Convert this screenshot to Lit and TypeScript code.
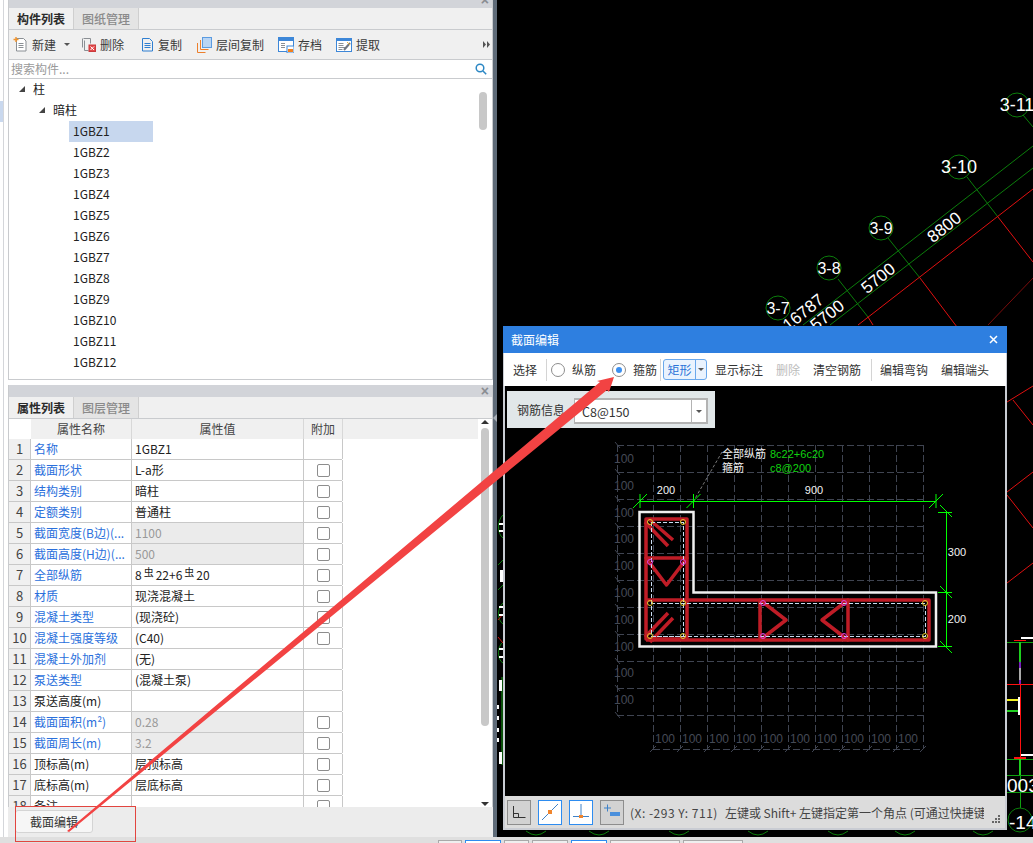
import { LitElement, html, css, svg } from 'lit'
import { customElement } from 'lit/decorators.js'

const FONT = `"Noto Sans CJK SC", "Liberation Sans", sans-serif`

// 属性列表 rows: name, value, blue label, greyed value, checkbox
const ROWS = [
    ['名称', '1GBZ1', 1, 0, 0],
    ['截面形状', 'L-a形', 1, 0, 1],
    ['结构类别', '暗柱', 1, 0, 1],
    ['定额类别', '普通柱', 1, 0, 1],
    ['截面宽度(B边)(...', '1100', 1, 1, 1],
    ['截面高度(H边)(...', '500', 1, 1, 1],
    ['全部纵筋', '', 1, 0, 1],
    ['材质', '现浇混凝土', 1, 0, 1],
    ['混凝土类型', '(现浇砼)', 1, 0, 1],
    ['混凝土强度等级', '(C40)', 1, 0, 1],
    ['混凝土外加剂', '(无)', 1, 0, 0],
    ['泵送类型', '(混凝土泵)', 1, 0, 0],
    ['泵送高度(m)', '', 0, 0, 0],
    ['截面面积(m²)', '0.28', 1, 1, 1],
    ['截面周长(m)', '3.2', 1, 1, 1],
    ['顶标高(m)', '层顶标高', 0, 0, 1],
    ['底标高(m)', '层底标高', 0, 0, 1],
    ['备注', '', 0, 0, 1],
] as const

const range = (n: number) => Array.from({ length: n }, (_, i) => i)

@customElement('app-root')
export class AppRoot extends LitElement {
    static styles = css`
        :host {
            display: block;
            position: relative;
            width: 1033px;
            height: 843px;
            overflow: hidden;
            background: #f4f4f4;
            font: 12px/21px "Noto Sans CJK SC", "Liberation Sans", sans-serif;
            color: #222;
        }
        .page { display: flex; flex-direction: column; height: 843px; }
        .main { display: flex; height: 837px; }
        .sliver { width: 8px; background: #fff; position: relative; box-sizing: border-box; }
        .sliver i { position: absolute; left: 0; top: 101px; width: 3px; height: 21px; background: #c9d8ee; }
        .sliver::after { content: ""; position: absolute; left: 3px; top: 0; bottom: 0; width: 1px; background: #d4d6da; }
        .side { width: 485px; display: flex; flex-direction: column; background: #fff; }
        .panel { display: flex; flex-direction: column; overflow: hidden; background: #fff; border-left: 1px solid #c9cbce; border-right: 1px solid #c9cbce; box-sizing: border-box; }
        .panel.top { height: 380px; border-bottom: 1px solid #c9cbce; }
        .panel.bottom { height: 422px; margin-top: 5px; }
        .caption { height: 8px; background: #d2d4d9; position: relative; flex: none; }
        .caption.small { height: 12px; }
        .x { position: absolute; right: 3px; top: -7px; color: #8a8d92; font: bold 14px/14px "Liberation Sans", sans-serif; }
        .caption.small .x { top: -1px; }
        .tabs { height: 21px; flex: none; display: flex; background: #f0f0f0; border-bottom: 1px solid #c9cbce; }
        .tab { width: 64px; text-align: center; color: #8a8a8a; background: #e4e4e4; border-right: 1px solid #cfcfcf; line-height: 21px; font-size: 12px; font-weight: 500; }
        .tab.on { color: #2b2b2b; background: #f0f0f0; font-weight: 700; }
        .tools { height: 29px; flex: none; display: flex; align-items: center; background: #f0f0f0; border-bottom: 1px solid #c9cbce; position: relative; color: #3a3a3a; }
        .tool { display: inline-flex; align-items: center; gap: 4px; white-space: nowrap; }
        .tool .caret { margin-left: 4px; }
        .caret { display: inline-block; width: 0; height: 0; border: 3px solid transparent; border-top: 3px solid #555; border-bottom: 0; }
        .more { position: absolute; right: 2px; top: 11px; line-height: 0; }
        .search { height: 18px; flex: none; display: flex; align-items: center; justify-content: space-between; padding: 0 5px 0 2px; color: #9a9a9a; border-bottom: 1px solid #c9cbce; line-height: 18px; }
        .tree { flex: 1; position: relative; overflow: hidden; background: #fff; color: #222; }
        .node { height: 21px; line-height: 20px; position: relative; white-space: nowrap; }
        .l0 { padding-left: 24px; }
        .l1 { padding-left: 44px; }
        .l2 { padding-left: 60px; }
        .tri { position: absolute; top: 7px; width: 6px; height: 6px; background: #444; clip-path: polygon(100% 0, 100% 100%, 0 100%); }
        .l0 .tri { left: 10px; }
        .l1 .tri { left: 30px; }
        .leaf { display: block; width: 84px; height: 21px; padding-left: 4px; box-sizing: border-box; }
        .leaf.sel { background: #c7d7ee; }
        .vbar { position: absolute; background: #c8c8c8; border-radius: 4px; width: 8px; }
        .vbar.one { right: 5px; top: 13px; height: 38px; }
        .grid { flex: 1; position: relative; overflow: hidden; background: #fff; }
        .head, .row { display: flex; height: 21px; line-height: 20px; box-sizing: border-box; border-bottom: 1px solid #c8c8c8; width: 333px; }
        .head { width: 469px; background: #f0f0f0; border-bottom: 0; height: 20px; }
        .head .c-no { background: #fff; border: 0; }
        .c-no { width: 22px; flex: none; text-align: center; background: #f0f0f0; border-right: 1px solid #c8c8c8; box-sizing: border-box; color: #444; font-size: 13px; }
        .c-name { width: 101px; flex: none; padding-left: 3px; box-sizing: border-box; border-right: 1px solid #c8c8c8; white-space: nowrap; overflow: hidden; background: #fff; }
        .c-val { width: 172px; flex: none; padding-left: 3px; box-sizing: border-box; border-right: 1px solid #c8c8c8; white-space: nowrap; background: #fff; }
        .c-add { width: 39px; flex: none; border-right: 1px solid #c8c8c8; box-sizing: border-box; background: #fff; display: flex; align-items: center; justify-content: center; }
        .th { background: #f0f0f0; text-align: center; padding: 0; color: #444; border-right: 1px solid #d8d8d8; }
        .head .c-add { border-right: 1px solid #d8d8d8; }
        .blue { color: #2a6fdc; }
        .off { background: #ebebeb; color: #999; }
        sup { font-size: 10px; line-height: 0; vertical-align: 4px; margin: 0 2px; }
        .check { width: 13px; height: 13px; box-sizing: border-box; border: 1px solid #8d8d8d; border-radius: 2px; background: #fff; }
        .up, .down { position: absolute; left: 472px; width: 0; height: 0; border: 4px solid transparent; }
        .up { top: 1px; border-top: 0; border-bottom: 4px solid #333; }
        .down { top: 383px; border-bottom: 0; border-top: 4px solid #333; }
        .vbar.two { left: 472px; width: 8px; top: 9px; height: 298px; }
        .actions { height: 30px; background: #ececec; flex: none; padding: 3px 0 0 7px; box-sizing: border-box; }
        .edit { width: 78px; height: 23px; padding: 0; font: 12px/21px "Noto Sans CJK SC", "Liberation Sans", sans-serif; color: #333; background: #f6f6f6; border: 1px solid #d4d4d4; border-radius: 3px; }
        .splitter { width: 4px; background: #5f6b78; position: relative; }
        .splitter i { position: absolute; left: 0; top: 414px; border: 4px solid transparent; border-left: 0; border-right: 4px solid #a9b0b8; }
        .cad { flex: 1; background: #000; overflow: hidden; line-height: 0; }
        .strip { height: 6px; background: #dfdfdf; display: flex; gap: 3px; padding: 3px 0 0 438px; box-sizing: border-box; overflow: hidden; }
        .pg { height: 6px; background: #efefef; border: 1px solid #a9a9a9; border-bottom: 0; box-sizing: border-box; }
        .pg.on { background: #fff; border-color: #2d8cf0; }
        .dlg { position: absolute; left: 503px; top: 326px; width: 504px; height: 504px; display: flex; flex-direction: column; background: #c9ccd3; box-sizing: border-box; }
        .dlg-title { height: 27px; flex: none; background: #2e7fe0; color: #fff; display: flex; align-items: center; justify-content: space-between; padding: 0 9px 0 8px; line-height: 27px; }
        .dlg-tools { height: 33px; flex: none; margin: 0 1px; background: #fff; display: flex; align-items: center; color: #333; }
        .btn { white-space: nowrap; }
        .btn.dim { color: #bcbcbc; }
        .sep { width: 1px; height: 22px; background: #d4d4d4; margin-left: 9px; flex: none; }
        .radio { width: 14px; height: 14px; border: 1px solid #8d8d8d; border-radius: 50%; box-sizing: border-box; position: relative; background: #fff; flex: none; }
        .radio.on::after { content: ""; position: absolute; inset: 3px; border-radius: 50%; background: #3d90f0; }
        .rlabel { margin-left: 7px; white-space: nowrap; }
        .split { display: flex; align-items: center; height: 21px; margin-left: 2px; border: 1px solid #6aa8ec; border-radius: 3px; background: #eaf3fe; box-sizing: border-box; }
        .split b { font-weight: 400; color: #2b74d8; width: 31px; text-align: center; border-right: 1px solid #6aa8ec; line-height: 19px; }
        .split .caret { margin: 0 2px; }
        .dlg-canvas { flex: 1; margin: 0 2px; background: #000; position: relative; overflow: hidden; line-height: 0; }
        .draw { display: block; }
        .info { position: absolute; left: 2px; top: 5px; width: 208px; height: 37px; background: #e1e7e9; display: flex; align-items: center; padding-left: 10px; box-sizing: border-box; line-height: 21px; color: #333; }
        .combo { position: absolute; left: 67px; top: 7px; width: 134px; height: 26px; background: #fff; border: 1px solid #b3b3b3; border-width: 2px 2px 2px 1px; box-sizing: border-box; display: flex; align-items: center; padding-left: 7px; }
        .combo span { flex: 1; font-size: 12.5px; }
        .drop { width: 14px; height: 100%; border-left: 1px solid #b3b3b3; display: flex; align-items: center; justify-content: center; }
        .dlg-status { height: 32px; flex: none; background: #dcdcdc; margin: 0 2px 2px; display: flex; align-items: center; padding-left: 2px; gap: 7px; position: relative; color: #444; overflow: hidden; box-sizing: border-box; }
        .sbtn { width: 24px; height: 25px; flex: none; box-sizing: border-box; border: 1px solid #8d8d8d; background: #d2d2d2; display: flex; align-items: center; justify-content: center; }
        .sbtn.act { background: #fff; border-color: #2d8cf0; }
        .msg { white-space: nowrap; width: 354px; overflow: hidden; margin-left: -1px; line-height: 21px; }
        .msg span { letter-spacing: 0.5px; margin-right: 7px; }
        .grip { position: absolute; right: 4px; bottom: 4px; }
        .mark { position: absolute; left: 15px; top: 806px; width: 121px; height: 36px; box-sizing: border-box; border: 1px solid #e2453f; }
        .arrow { position: absolute; left: 0; top: 0; pointer-events: none; }
    `

    render() {
        return html`
            <div class="page">
                <div class="main">
                    <div class="sliver"><i></i></div>
                    <div class="side">
                        <section class="panel top">
                            <div class="caption"><span class="x">×</span></div>
                            <div class="tabs">
                                <span class="tab on">构件列表</span><span class="tab">图纸管理</span>
                            </div>
                            ${this._toolbar()}
                            <div class="search">
                                <span>搜索构件...</span>
                                <svg width="12" height="12" viewBox="0 0 12 12" fill="none" stroke="#2b87c4" stroke-width="1.5">
                                    <circle cx="5" cy="5" r="3.8"></circle><path d="M8 8l3.2 3.2"></path>
                                </svg>
                            </div>
                            ${this._tree()}
                        </section>
                        <section class="panel bottom">
                            <div class="caption small"><span class="x">×</span></div>
                            <div class="tabs">
                                <span class="tab on">属性列表</span><span class="tab">图层管理</span>
                            </div>
                            ${this._table()}
                        </section>
                        <div class="actions"><button class="edit">截面编辑</button></div>
                    </div>
                    <div class="splitter"><i></i></div>
                    <div class="cad">${this._background()}</div>
                </div>
                <div class="strip">
                    ${[[24, 0], [36, 1], [25, 0], [36, 0], [36, 1], [70, 0], [60, 0]].map(
                        ([w, on]) => html`<span class=${on ? 'pg on' : 'pg'} style="width:${w}px"></span>`
                    )}
                </div>
            </div>
            ${this._dialog()}
            <div class="mark"></div>
            <svg class="arrow" viewBox="0 0 1033 843" width="1033" height="843">
                <polygon fill="#f24343" points="67,831 600,382 597,381 614,377 609,392 607,390 69,832"></polygon>
            </svg>
        `
    }

    _toolbar() {
        return html`
            <div class="tools">
                <span class="tool" style="margin-left:4px">
                    <svg width="15" height="15" viewBox="0 0 15 15" fill="none" stroke="#8a8f94">
                        <path fill="#fff" d="M3.5 1.5h7l2.5 2.5v10h-9.5z"></path>
                        <path d="M5.5 6.5h5M5.5 8.5h5M5.5 10.5h5"></path>
                        <path stroke="#f0932b" stroke-width="1.4" d="M0.5 2.5h5M3 0v5"></path>
                    </svg>新建<i class="caret"></i>
                </span>
                <span class="tool" style="margin-left:11px">
                    <svg width="15" height="15" viewBox="0 0 15 15" fill="none" stroke="#8a8f94">
                        <path d="M3.5 3.5v10h4M2.5 1.5h7v5"></path><path d="M1.5 1.5v9"></path>
                        <rect x="8" y="8" width="6.5" height="6.5" fill="#e4484a" stroke="#c93a3c"></rect>
                        <path stroke="#fff" d="M9.5 9.5l3.5 3.5M13 9.5l-3.5 3.5"></path>
                    </svg>删除
                </span>
                <span class="tool" style="margin-left:17px">
                    <svg width="13" height="15" viewBox="0 0 13 15" fill="none" stroke="#2f7fd1">
                        <path d="M1.5 1.5h7l3 3v9.5h-10z"></path>
                        <path d="M3.5 6.5h6M3.5 8.5h6M3.5 10.5h6"></path>
                    </svg>复制
                </span>
                <span class="tool" style="margin-left:15px">
                    <svg width="15" height="16" viewBox="0 0 15 16" fill="none">
                        <rect x="5.5" y="0.5" width="9" height="10" fill="#b9d5f4" stroke="#5b9be0"></rect>
                        <path stroke="#ec7f2c" d="M3.5 3v9.5h8M0.5 6v9.5h8"></path>
                    </svg>层间复制
                </span>
                <span class="tool" style="margin-left:14px">
                    <svg width="16" height="16" viewBox="0 0 16 16" fill="none">
                        <rect x="0.5" y="0.5" width="15" height="14" fill="#fff" stroke="#3d87d8"></rect>
                        <rect x="0.5" y="0.5" width="15" height="3" fill="#3d87d8" stroke="#3d87d8"></rect>
                        <path stroke="#8a8f94" d="M3 6.5h4M3 8.5h4M3 10.5h4"></path>
                        <rect x="9" y="9" width="7" height="7" fill="#fff" stroke="#3d87d8"></rect>
                        <rect x="10" y="12" width="5" height="3" fill="#f0801e"></rect>
                    </svg>存档
                </span>
                <span class="tool" style="margin-left:14px">
                    <svg width="16" height="16" viewBox="0 0 16 16" fill="none">
                        <rect x="0.5" y="1.5" width="15" height="13" fill="#fff" stroke="#3d87d8"></rect>
                        <rect x="0.5" y="1.5" width="15" height="2" fill="#3d87d8" stroke="#3d87d8"></rect>
                        <path stroke="#8a8f94" d="M2.5 6.5h5M2.5 8.5h5M2.5 10.5h7M2.5 12.5h4"></path>
                        <path stroke="#6f7680" stroke-width="2" d="M8 13l6-7"></path>
                        <path stroke="#e8b64a" stroke-width="1" d="M11 5l3 3"></path>
                    </svg>提取
                </span>
                <span class="more">
                    <svg width="7" height="7" viewBox="0 0 7 7" fill="#555"><path d="M0 0l3 3.5-3 3.5zM4 0l3 3.5-3 3.5z"></path></svg>
                </span>
            </div>
        `
    }

    _tree() {
        return html`
            <div class="tree">
                <div class="node l0"><i class="tri"></i>柱</div>
                <div class="node l1"><i class="tri"></i>暗柱</div>
                ${range(13).map(i => html`
                    <div class="node l2"><span class=${i === 0 ? 'leaf sel' : 'leaf'}>1GBZ${i + 1}</span></div>
                `)}
                <div class="vbar one"></div>
            </div>
        `
    }

    _table() {
        return html`
            <div class="grid">
                <div class="head">
                    <span class="c-no"></span>
                    <span class="c-name th">属性名称</span>
                    <span class="c-val th">属性值</span>
                    <span class="c-add th">附加</span>
                </div>
                ${ROWS.map((r, i) => html`
                    <div class="row">
                        <span class="c-no">${i + 1}</span>
                        <span class="c-name ${r[2] ? 'blue' : ''}">${r[0]}</span>
                        <span class="c-val ${r[3] ? 'off' : ''}">${
                            i === 6 ? html`8<sup>虫</sup>22+6<sup>虫</sup>20` : r[1]
                        }</span>
                        <span class="c-add">${r[4] ? html`<i class="check"></i>` : ''}</span>
                    </div>
                `)}
                <i class="up"></i>
                <div class="vbar two"></div>
                <i class="down"></i>
            </div>
        `
    }

    _dialog() {
        return html`
            <div class="dlg">
                <div class="dlg-title">
                    <span>截面编辑</span>
                    <svg width="9" height="9" viewBox="0 0 9 9" stroke="#fff" stroke-width="1.5"><path d="M1 1l7 7M8 1l-7 7"></path></svg>
                </div>
                <div class="dlg-tools">
                    <span class="btn" style="margin-left:9px">选择</span>
                    <i class="sep"></i>
                    <i class="radio" style="margin-left:4px"></i><span class="rlabel">纵筋</span>
                    <i class="radio on" style="margin-left:16px"></i><span class="rlabel">箍筋</span>
                    <i class="sep" style="margin-left:3px"></i>
                    <span class="split"><b>矩形</b><i class="caret"></i></span>
                    <span class="btn" style="margin-left:8px">显示标注</span>
                    <span class="btn dim" style="margin-left:13px">删除</span>
                    <span class="btn" style="margin-left:13px">清空钢筋</span>
                    <i class="sep" style="margin-left:10px"></i>
                    <span class="btn" style="margin-left:8px">编辑弯钩</span>
                    <span class="btn" style="margin-left:13px">编辑端头</span>
                </div>
                <div class="dlg-canvas">
                    ${this._drawing()}
                    <div class="info">
                        <span>钢筋信息</span>
                        <div class="combo"><span>C8@150</span><i class="drop"><i class="caret"></i></i></div>
                    </div>
                </div>
                <div class="dlg-status">
                    <span class="sbtn">
                        <svg width="14" height="14" viewBox="0 0 14 14" fill="none" stroke="#333"><path d="M1.5 1v11.5h12M1.5 8.5h5v4"></path></svg>
                    </span>
                    <span class="sbtn act">
                        <svg width="18" height="18" viewBox="0 0 18 18" fill="none" stroke="#3f82c8"><path d="M1 17L17 1"></path><rect x="7" y="7" width="4" height="4" fill="#f0852d" stroke="none"></rect></svg>
                    </span>
                    <span class="sbtn act">
                        <svg width="18" height="18" viewBox="0 0 18 18" fill="none" stroke="#3f82c8"><path d="M1 13.5h16M9 1v12"></path><rect x="7" y="12" width="4" height="3" fill="#f0852d" stroke="none"></rect></svg>
                    </span>
                    <span class="sbtn">
                        <svg width="18" height="18" viewBox="0 0 18 18" fill="none"><path stroke="#3f82c8" d="M1 5h7M4.5 1.5v7"></path><rect x="7" y="9" width="10" height="4" fill="#4a8fdc"></rect></svg>
                    </span>
                    <div class="msg"><span>(X: -293 Y: 711)</span>左键或 Shift+ 左键指定第一个角点 (可通过快捷键切换)</div>
                    <svg class="grip" width="10" height="9" viewBox="0 0 10 9" fill="#666">
                        <rect x="7" y="0" width="2" height="2"></rect><rect x="4" y="3" width="2" height="2"></rect><rect x="7" y="3" width="2" height="2"></rect>
                        <rect x="1" y="6" width="2" height="2"></rect><rect x="4" y="6" width="2" height="2"></rect><rect x="7" y="6" width="2" height="2"></rect>
                    </svg>
                </div>
            </div>
        `
    }

    // drawing coordinates are page coordinates, see viewBox
    _drawing() {
        const grid = '#3f4451'
        const green = '#00ff00'
        const red = '#bf1c26'
        const vx = range(11).map(i => 653 + i * 27)
        const hy = range(11).map(i => 445 + i * 27)
        const yellow = [[650, 522], [683, 522], [650, 603], [683, 603], [650, 636], [683, 636], [925, 603], [925, 636]]
        const pink = [[650, 562], [683, 562], [763, 603], [763, 636], [844, 603], [844, 636]]
        const tick = (x: number, y: number) => svg`<path d="M${x - 7} ${y + 7}L${x + 7} ${y - 7}M${x} ${y - 7}V${y + 7}"></path>`
        return html`
            <svg class="draw" viewBox="505 386 500 412" width="500" height="412">
                <g stroke=${grid} fill="none" stroke-dasharray="7 3" shape-rendering="crispEdges">
                    ${vx.map(x => svg`<path d="M${x} 445V749"></path>`)}
                    ${hy.map(y => svg`<path d="M617 ${y}H923"></path>`)}
                    <path d="M617 445V714"></path>
                    <path d="M653 749H923"></path>
                </g>
                <g stroke=${grid} fill="none">
                    ${hy.map(y => svg`<path d="M615 ${y - 3}l5 6"></path>`)}
                    ${vx.map(x => svg`<path d="M${x - 3} 752l6 -6"></path>`)}
                </g>
                <g fill="#454a56" font-size="12" font-family="Liberation Sans, sans-serif">
                    ${range(10).map(i => svg`<text x="614" y=${463 + i * 26.8}>100</text>`)}
                    ${range(10).map(i => svg`<text x=${655 + i * 27} y="743">100</text>`)}
                </g>
                <path d="M693 502L722 452" stroke="#777" stroke-dasharray="3 2"></path>
                <path fill="none" stroke="#f0f0f0" stroke-width="2.5" d="M639.5 512H693.5V592.5H936V646.5H639.5Z"></path>
                <g fill="none" stroke=${red} stroke-width="3.5" stroke-linejoin="round">
                    <path d="M646 519H687V639H646Z"></path>
                    <path d="M646 600H929V640H646"></path>
                    <path d="M646 558H687L666.5 585Z"></path>
                    <path d="M650 520L673 540M645 522L668 546M668 613L645 637M673 618L650 642"></path>
                    <path d="M760 600V640L786 620Z"></path>
                    <path d="M848 600V640L822 620Z"></path>
                </g>
                <g fill="none" stroke="#c9dcf0" stroke-dasharray="4 2" shape-rendering="crispEdges">
                    <path d="M651 522H683V636H651Z"></path>
                    <path d="M651 603H925V636H651"></path>
                </g>
                <g fill="none" stroke="#e6c92c">${yellow.map(p => svg`<circle cx=${p[0]} cy=${p[1]} r="2.5"></circle>`)}</g>
                <g fill="none" stroke="#e040e0">${pink.map(p => svg`<circle cx=${p[0]} cy=${p[1]} r="2.5"></circle>`)}</g>
                <g fill="none" stroke=${green} shape-rendering="crispEdges">
                    <path d="M640 501.5H936M946.5 512V647M938 512.5H952M938 592.5H952M938 646.5H952"></path>
                </g>
                <g fill="none" stroke=${green}>
                    ${tick(640, 501)}${tick(693.5, 501)}${tick(936, 501)}
                    <path d="M940 505l12 12M940 586l12 12M940 641l12 12"></path>
                </g>
                <g fill="#f2f2f2" font-size="11" font-family="Liberation Sans, sans-serif" text-anchor="middle">
                    <text x="666" y="494">200</text>
                    <text x="814" y="494">900</text>
                    <text x="957" y="556">300</text>
                    <text x="957" y="623">200</text>
                </g>
                <g font-size="11" font-family=${FONT}>
                    <text x="722" y="458" fill="#f0f0f0">全部纵筋</text>
                    <text x="722" y="472" fill="#f0f0f0">箍筋</text>
                    <text x="770" y="458" fill="#0fd30f" font-family="Liberation Sans, sans-serif">8c22+6c20</text>
                    <text x="770" y="472" fill="#0fd30f" font-family="Liberation Sans, sans-serif">c8@200</text>
                </g>
            </svg>
        `
    }

    _background() {
        const bubble = (x: number, y: number, t: string, size = 16) => svg`
            <circle cx=${x} cy=${y} r="12" fill="none" stroke="#0b7d0b"></circle>
            <text x=${x} y=${y + size * 0.36} font-size=${size} fill="#fff" text-anchor="middle" font-family="Liberation Sans, sans-serif">${t}</text>
        `
        const dim = (x: number, y: number, t: string) => svg`
            <text transform="translate(${x} ${y}) rotate(-39)" font-size="17" fill="#fff" text-anchor="middle" font-family="Liberation Sans, sans-serif" dy="6">${t}</text>
        `
        const bottomArcs = [536, 599, 679, 758, 838, 905, 983]
        return html`
            <svg class="bg" viewBox="497 0 536 837" width="536" height="837">
                <g fill="none" stroke="#0b7d0b">
                    <path d="M1023 115L1033 127M967 177L998 217M888 238L920 278M838 279L868 317"></path>
                    <path d="M1033 146L803 325M1033 168L830 325"></path>
                </g>
                <g fill="none" stroke="#e01010">
                    <path d="M1033 189L858 325M998 217L1033 262M920 278L957 327M868 317L873 325"></path>
                    <path d="M1007 402L1033 386M1013 400L1033 425"></path>
                    <path d="M1007 492L1033 472M1007 495L1033 528M1007 583L1033 563"></path>
                </g>
                <path d="M1033 278L988 325" fill="none" stroke="#7a0c0c"></path>
                ${bubble(1017, 105, '3-11', 18)}
                ${bubble(959, 167, '3-10', 18)}
                ${bubble(881, 228, '3-9')}
                ${bubble(829, 268, '3-8')}
                ${bubble(778, 308, '3-7')}
                ${dim(944, 227, '8800')}
                ${dim(878, 278, '5700')}
                ${dim(803, 312, '16787')}
                ${dim(827, 315, '5700')}

                <!-- strip left of the dialog -->
                <g fill="none" stroke="#0b7d0b">
                    <path d="M503 515C497 520 497 534 503 538M503 560L498 565M503 585L498 590M503 603C497 608 497 620 503 624M503 642C497 646 497 660 503 663"></path>
                    <path stroke="#12a012" d="M502 677V765"></path>
                </g>
                <path d="M498 637L503 643M503 614L498 620" stroke="#d01010" fill="none"></path>
                <g fill="#fff">
                    <rect x="499" y="523" width="4" height="2"></rect><rect x="499" y="530" width="4" height="2"></rect>
                    <rect x="500" y="570" width="3" height="12"></rect>
                    <rect x="499" y="606" width="4" height="2"></rect><rect x="499" y="614" width="4" height="2"></rect>
                    <rect x="499" y="648" width="4" height="2"></rect><rect x="499" y="656" width="4" height="2"></rect>
                    <rect x="499" y="680" width="3" height="11"></rect>
                    <rect x="497" y="705" width="2" height="4"></rect><rect x="497" y="716" width="2" height="4"></rect>
                    <rect x="497" y="728" width="2" height="4"></rect><rect x="497" y="738" width="2" height="4"></rect>
                    <rect x="499" y="752" width="3" height="12"></rect>
                </g>

                <!-- structure right of the dialog -->
                <g fill="none" shape-rendering="crispEdges">
                    <path stroke="#10a010" d="M1007 642.5H1033M1007 759.5H1033M1007 775.5H1033M1007 792.5H1033M1020.5 759V808"></path>
                    <path stroke="#1ed01e" stroke-width="2" d="M1020 642V662M1020 759V775"></path>
                    <path stroke="#aaa" stroke-width="2" d="M1020 668V681"></path>
                    <path stroke="#ff1010" stroke-width="1.5" d="M1007 684.5H1033M1014 640.5H1026M1014 758H1026M1020.5 684V757"></path>
                    <path stroke="#f0f020" stroke-width="2" d="M1007 700H1018"></path>
                    <path stroke="#20d020" stroke-width="2" d="M1007 711H1018"></path>
                    <path stroke="#fff" stroke-width="2" d="M1018.5 697V715M1021 638H1033M1021 755H1033"></path>
                    <path stroke="#7a20c0" stroke-width="2" d="M1020 662V668M1020 680V684"></path>
                </g>
                <circle cx="1020" cy="820" r="12" fill="none" stroke="#0b7d0b"></circle>
                <text x="1007" y="792" font-size="19" fill="#fff" font-family="Liberation Sans, sans-serif">003</text>
                <text x="1009" y="829" font-size="19" fill="#fff" font-family="Liberation Sans, sans-serif">-14</text>
                <g fill="none" stroke="#0b7d0b">
                    ${bottomArcs.map(x => svg`<path d="M${x - 10} 831Q${x} 839 ${x + 10} 831"></path>`)}
                </g>
            </svg>
        `
    }
}
